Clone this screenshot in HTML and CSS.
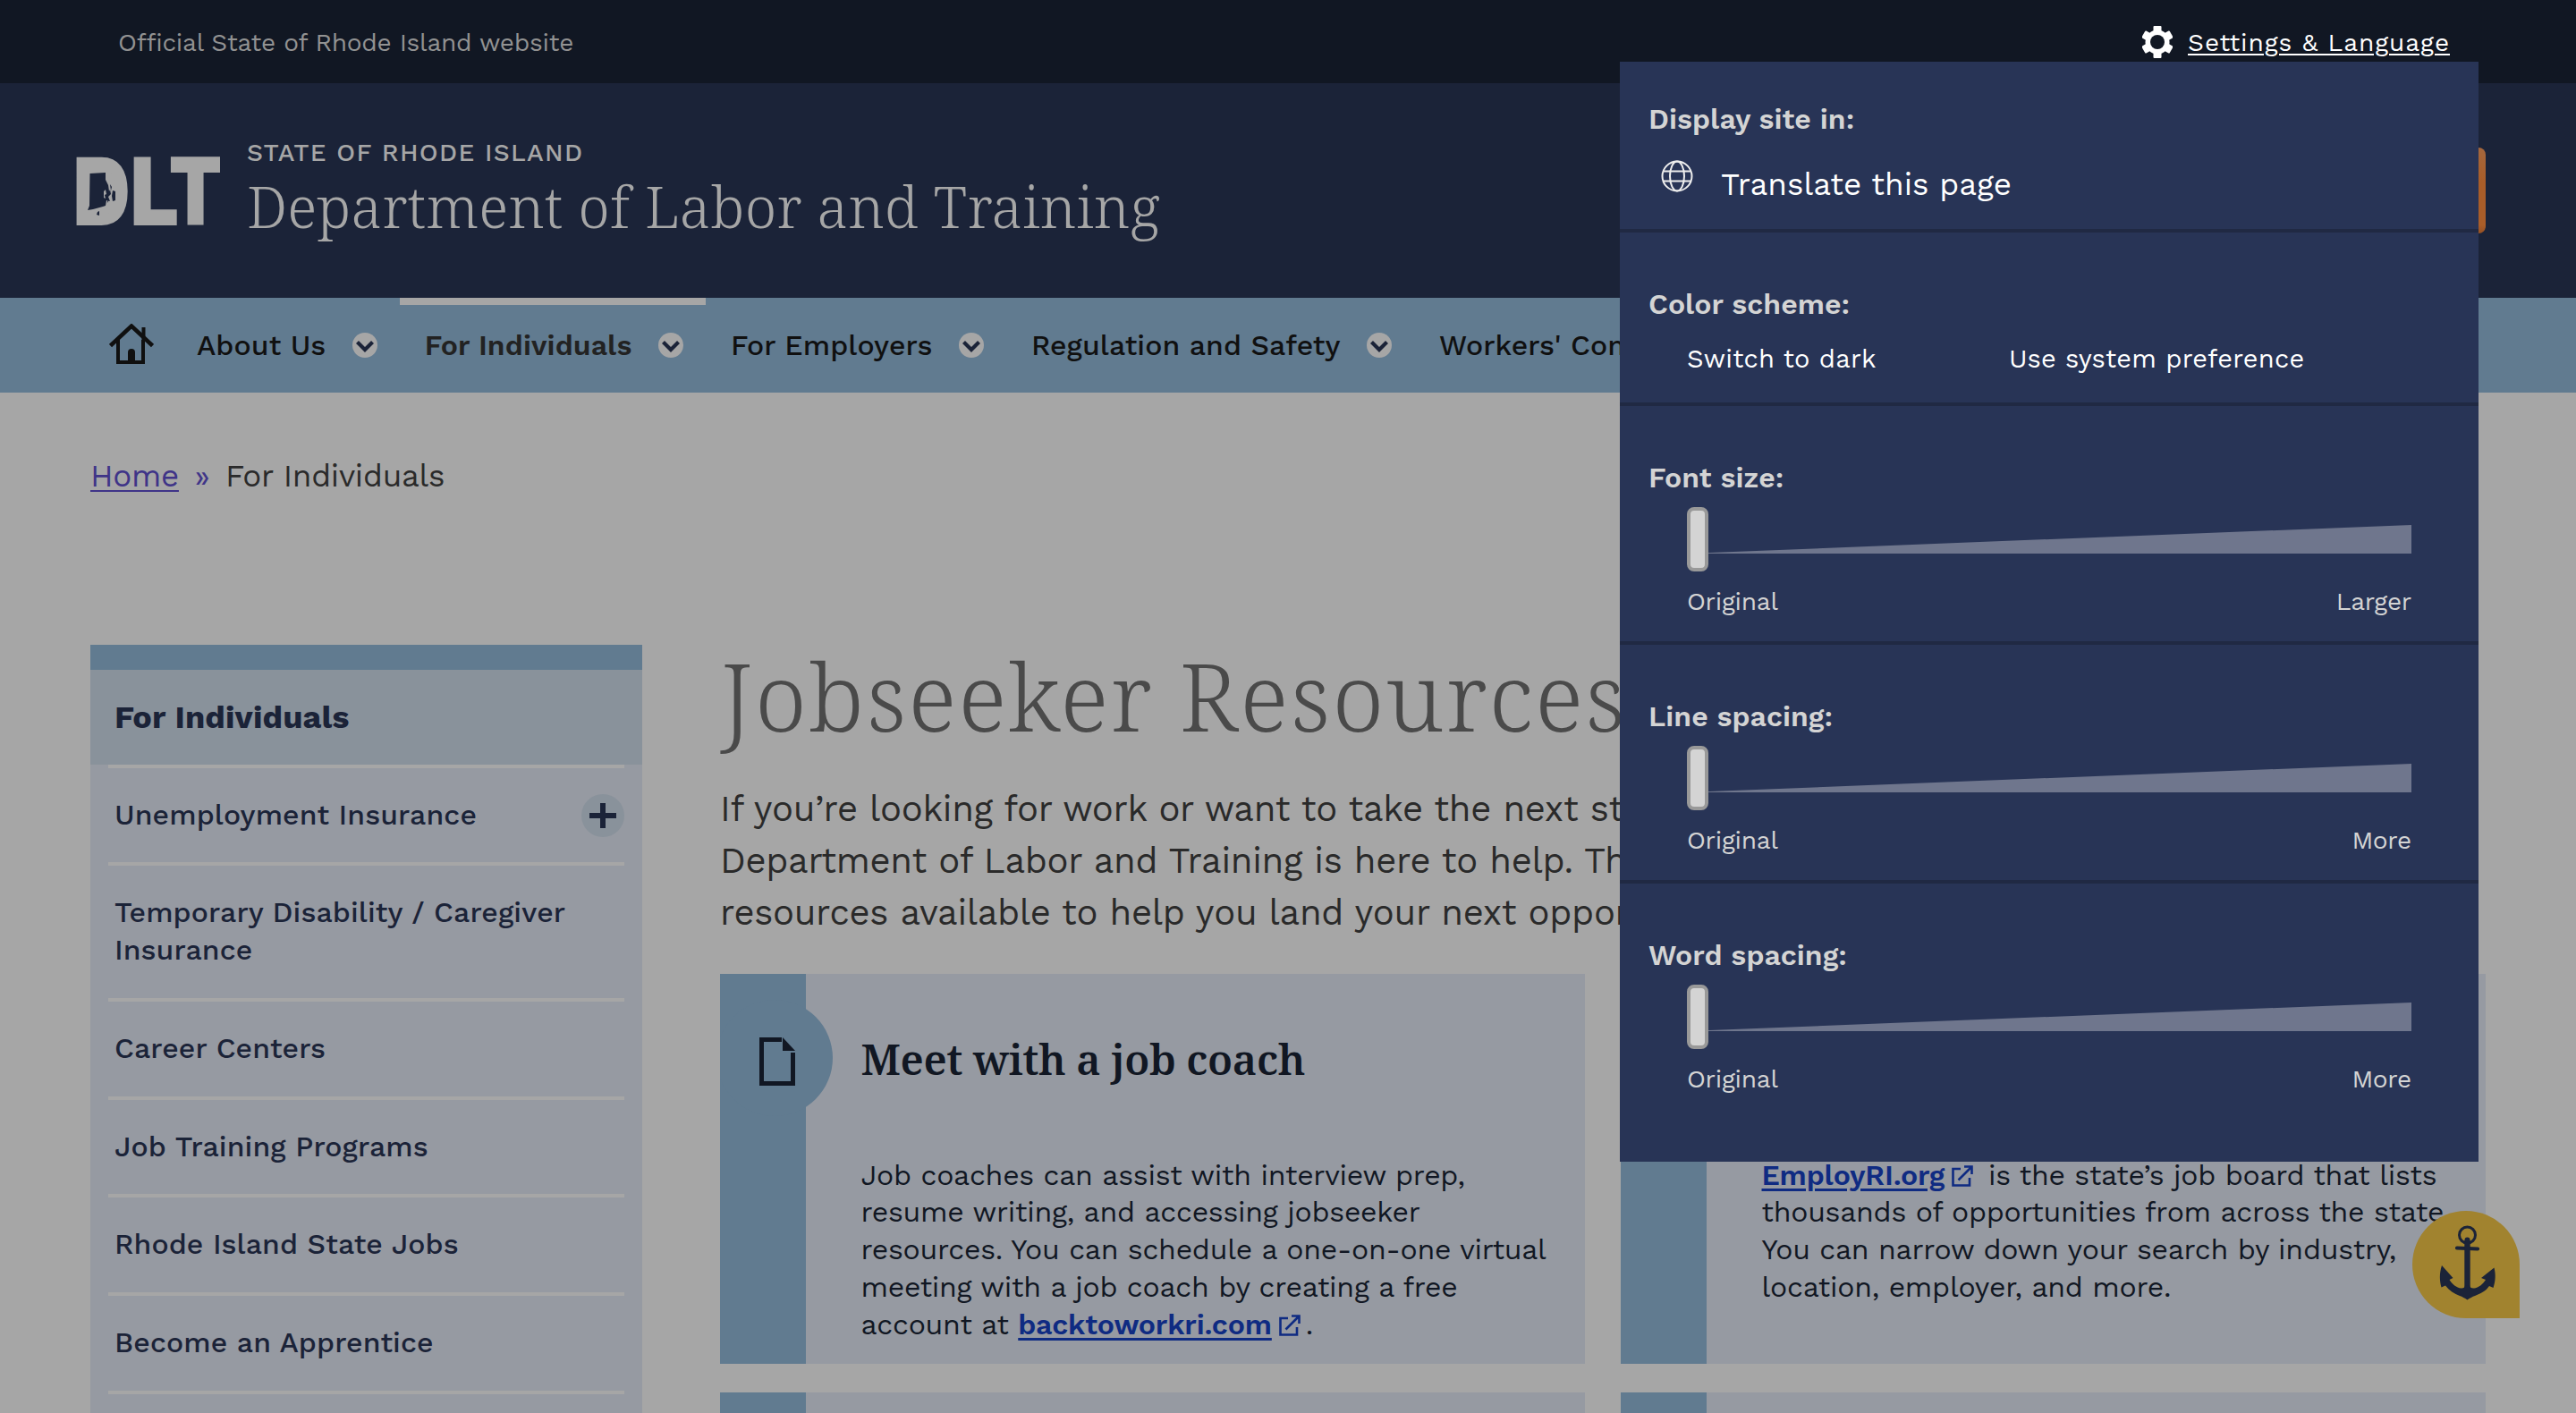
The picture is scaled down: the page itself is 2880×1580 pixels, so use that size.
FILE: index.html
```
<!DOCTYPE html>
<html lang="en">
<head>
<meta charset="utf-8">
<title>Jobseeker Resources | RI Department of Labor and Training</title>
<link rel="stylesheet" href="styles.css">
</head>
<body>
<svg class="defs" aria-hidden="true">
  <symbol id="chevron" viewBox="0 0 28 28"><circle cx="14" cy="14" r="14" fill="#a6a6a6"/><path d="M5.500 10.500 14 19l8.500-8.500" fill="none" stroke="#1b2338" stroke-width="4.200"/></symbol>
  <symbol id="external" viewBox="0 0 24 24"><path d="M10 4H1.500v18.500H20V14M7.500 16.500 22 2M14 1.500h8.500V10" fill="none" stroke="currentColor" stroke-width="2.600"/></symbol>
</svg>
<div class="page">
  <div class="topbar">
    <span class="official">Official State of Rhode Island website</span>
    <a class="settings"><svg class="gear" viewBox="0 0 34 36"><g fill="#fff"><rect x="12.500" y="0" width="9" height="36" rx="1"/><rect x="12.500" y="0" width="9" height="36" rx="1" transform="rotate(60 17 18)"/><rect x="12.500" y="0" width="9" height="36" rx="1" transform="rotate(120 17 18)"/><circle cx="17" cy="18" r="13.500"/></g><circle cx="17" cy="18" r="8" fill="#111723"/></svg><span class="settings-label">Settings &amp; Language</span></a>
  </div>

  <header class="masthead">
    <svg class="logo" viewBox="0 0 160 76" aria-label="DLT">
      <g class="logo-text"><text x="-5" y="76" textLength="66" lengthAdjust="spacingAndGlyphs">D</text><text x="59" y="76" textLength="56" lengthAdjust="spacingAndGlyphs">L</text><text x="104" y="76" textLength="59" lengthAdjust="spacingAndGlyphs">T</text></g>
      <path d="M12 13h24l8 13v26l-8 11H12z" fill="#a6a6a6"/>
      <path d="M15.500 18 33 17v8l3 6 1 7 1-2 1 5-3 3 2 5-4-1-1 6-3 1-11 3-6 1 2-5zM41 37l3 1v10l-3 1-1-6zM24 61l2-1v5l-3-1zM35 46l2 1-2 4zM38 30l2 3-1 4z" fill="#1b2338"/>
      <path d="M31 38l2-2 1 5-2 1 1 4-2-1z" fill="#a6a6a6"/>
    </svg>
    <div class="site-name">
      <div class="state">STATE OF RHODE ISLAND</div>
      <div class="department">Department of Labor and Training</div>
    </div>
    <div class="cta"></div>
  </header>

  <nav class="mainnav">
    <svg class="home" viewBox="0 0 50 46"><path d="M1.500 24.500 25 2.500l23.500 22" fill="none" stroke="#101010" stroke-width="4.500"/><path d="M10 18v25h28V18M38.500 20V4" fill="none" stroke="#101010" stroke-width="4"/><path d="M21 42V32a4 4 0 0 1 8 0v10z" fill="#101010"/></svg>
    <a class="nav-item">About Us<svg><use href="#chevron"/></svg></a>
    <a class="nav-item current">For Individuals<svg><use href="#chevron"/></svg></a>
    <a class="nav-item">For Employers<svg><use href="#chevron"/></svg></a>
    <a class="nav-item">Regulation and Safety<svg><use href="#chevron"/></svg></a>
    <a class="nav-item">Workers' Compensation<svg><use href="#chevron"/></svg></a>
  </nav>

  <div class="breadcrumb"><a>Home</a><span class="sep">»</span><span>For Individuals</span></div>

  <div class="layout">
    <aside class="sidebar">
      <div class="side-title">For Individuals</div>
      <a class="side-item">Unemployment Insurance<svg class="plus" viewBox="0 0 48 48"><circle cx="24" cy="24" r="24" fill="#89929b"/><path d="M9 24h30M24 10v28" stroke="#1b2338" stroke-width="6"/></svg></a>
      <a class="side-item">Temporary Disability / Caregiver Insurance</a>
      <a class="side-item">Career Centers</a>
      <a class="side-item">Job Training Programs</a>
      <a class="side-item">Rhode Island State Jobs</a>
      <a class="side-item">Become an Apprentice</a>
      <a class="side-item">&nbsp;</a>
    </aside>
    <main class="content">
      <h1>Jobseeker Resources</h1>
      <p class="intro">If you’re looking for work or want to take the next step,<br>Department of Labor and Training is here to help. There are<br>resources available to help you land your next opportunity.</p>
      <div class="cards">
        <article class="card">
          <div class="strip"><div class="bubble"><svg viewBox="0 0 40 54"><path d="M25 2.500H2.500v49h35V17" fill="none" stroke="#111723" stroke-width="5"/><path d="M26 0v15h14z" fill="#111723"/></svg></div></div>
          <div class="card-body">
            <h2>Meet with a job coach</h2>
            <p>Job coaches can assist with interview prep,<br>resume writing, and accessing jobseeker<br>resources. You can schedule a one-on-one virtual<br>meeting with a job coach by creating a free<br>account at <a>backtoworkri.com</a><svg class="ext"><use href="#external"/></svg>.</p>
          </div>
        </article>
        <article class="card">
          <div class="strip"></div>
          <div class="card-body">
            <h2>Find a job</h2>
            <p><a>EmployRI.org</a><svg class="ext"><use href="#external"/></svg> is the state’s job board that lists<br>thousands of opportunities from across the state.<br>You can narrow down your search by industry,<br>location, employer, and more.</p>
          </div>
        </article>
        <article class="card"><div class="strip"></div></article>
        <article class="card"><div class="strip"></div></article>
      </div>
    </main>
  </div>

  <section class="panel">
    <div class="group language">
      <h3>Display site in:</h3>
      <a class="translate"><svg viewBox="0 0 36 36"><g fill="none" stroke="#eee" stroke-width="2"><circle cx="18" cy="18" r="16.500"/><ellipse cx="18" cy="18" rx="8" ry="16.500"/><path d="M2.500 12.500h31M2.500 23.500h31"/></g></svg><span>Translate this page</span></a>
    </div>
    <div class="group scheme">
      <h3>Color scheme:</h3>
      <div class="choices"><a>Switch to dark</a><a>Use system preference</a></div>
    </div>
    <div class="group">
      <h3>Font size:</h3>
      <div class="slider"><div class="wedge"></div><div class="thumb"></div></div>
      <div class="ends"><span>Original</span><span>Larger</span></div>
    </div>
    <div class="group">
      <h3>Line spacing:</h3>
      <div class="slider"><div class="wedge"></div><div class="thumb"></div></div>
      <div class="ends"><span>Original</span><span>More</span></div>
    </div>
    <div class="group last">
      <h3>Word spacing:</h3>
      <div class="slider"><div class="wedge"></div><div class="thumb"></div></div>
      <div class="ends"><span>Original</span><span>More</span></div>
    </div>
  </section>

  <a class="anchor-badge"><svg viewBox="0 0 120 120"><g fill="none" stroke="#1b2338"><circle cx="61.500" cy="27" r="9" stroke-width="3"/><path d="M50 41.500 73 42.500" stroke-width="4.200" stroke-linecap="round"/><path d="M61.500 33v56" stroke-width="6.400"/><circle cx="61.500" cy="32.500" r="1.500" stroke-width="3"/></g><path d="M33 61 45.500 75l-4 2c3 5 8 9 13 9.500 3 .2 4-1 4.500-3h5c.5 2 2 3.200 5 3 5-.5 10-4.500 13-9.500l-5-2L91.500 63.500c2 8 1.500 15-1 22.500l-4.500-2c-4 6-10 8.500-16 11-3 1-5.500 2.500-8.500 4.500-3-2-5.500-3.500-8.500-4.500-6-2.500-12-6-16-11.500l-4.500 2c-2-7-2.500-15.500 .5-24.500z" fill="#1b2338"/></svg></a>
</div>
</body>
</html>
```
FILE: styles.css
```
* { box-sizing: border-box; }
body { margin: 0; background: #a6a6a6; font-family: "Work Sans", Inter, sans-serif; color: #2a2a2a; }
h1, h2, h3, p { margin: 0; font-weight: inherit; }
svg { display: block; flex: none; }
.defs { position: absolute; width: 0; height: 0; }
.page { position: relative; width: 2880px; height: 1580px; overflow: hidden; }

/* Top bar */
.topbar { display: flex; justify-content: space-between; align-items: center; height: 93px; padding: 1px 141px 0 132px; background: #111723; }
.official { color: #929292; font-size: 28px; letter-spacing: -.25px; }
.settings { display: flex; align-items: center; gap: 17px; color: #fff; font-size: 28px; }
.settings-label { letter-spacing: .93px; text-decoration: underline; text-decoration-thickness: 2px; text-underline-offset: 3px; }
.gear { width: 34px; height: 36px; }

/* Masthead */
.masthead { display: flex; height: 240px; padding: 59px 101px 0 85px; background: #1b2338; color: #a6a6a6; }
.logo { width: 160px; height: 76px; margin-top: 24px; overflow: visible; }
.logo-text { font: 800 115.200px "Work Sans", Inter, sans-serif; fill: #a6a6a6; }
.site-name { margin-left: 31px; }
.state { font-size: 28px; line-height: 38px; font-weight: 500; letter-spacing: 1.300px; }
.department { margin-top: 3px; font: 300 64px/76px "Roboto Slab", "Noto Serif", serif; letter-spacing: .1px; white-space: nowrap; }
.cta { width: 220px; height: 96px; margin: 13px 0 0 auto; border-radius: 8px; background: linear-gradient(#a5673d, #a95d29 40%, #a95d29 90%, #955024); }

/* Main navigation */
.mainnav { display: flex; align-items: center; height: 106px; padding-left: 122px; background: #617b90; color: #101010; }
.home { width: 50px; height: 46px; margin: -3px 20px 0 0; }
.nav-item { display: flex; align-items: center; gap: 29.500px; height: 106px; padding: 0 25px 0 28px; font-size: 32px; font-weight: 500; letter-spacing: .08px; white-space: nowrap; }
.nav-item svg { width: 28px; height: 28px; }
.current { box-shadow: inset 0 8px #a6a6a6; color: #222; font-weight: 600; }

/* Breadcrumb */
.breadcrumb { display: flex; height: 118px; padding: 67.500px 0 0 101px; font-size: 35px; line-height: 50px; letter-spacing: -.25px; }
.breadcrumb a, .sep { color: #3f3488; }
.breadcrumb a { text-decoration: underline; text-decoration-thickness: 2px; text-underline-offset: 4px; }
.sep { margin: 0 17.500px; }

.layout { display: flex; gap: 87px; padding: 163.700px 101px 0; }

/* Section menu */
.sidebar { width: 617px; height: 900px; border-top: 28.500px solid #617b90; background: #969aa2; color: #1b2338; }
.side-title { height: 106px; padding-left: 27px; background: #89929b; font-size: 36px; line-height: 106px; font-weight: 700; letter-spacing: .1px; }
.side-item { display: flex; align-items: center; justify-content: space-between; margin: 0 20px; padding: 31.900px 0 31.900px 7px; border-top: 4px solid #a6a6a6; font-size: 32px; line-height: 41.900px; font-weight: 500; letter-spacing: .1px; }
.plus { width: 48px; height: 48px; margin: -4px 0; }

/* Content */
.content { flex: 1; }
h1 { font: 300 105px/113px "Roboto Slab", "Noto Serif", serif; letter-spacing: 1.900px; color: #4a4a4a; }
.intro { margin-top: 42px; font-size: 40px; line-height: 57.900px; letter-spacing: -.3px; white-space: nowrap; }
.cards { display: grid; grid-template-columns: 967px 967px; gap: 32px 40px; margin-top: 39.700px; }
.card { display: flex; height: 435.500px; background: #969aa2; color: #111723; overflow: hidden; }
.strip { width: 96px; background: #617b90; }
.bubble { display: flex; align-items: center; justify-content: center; width: 130px; height: 130px; margin: 29px 0 0 -4px; padding: 7px 0 0 5px; border-radius: 50%; background: #617b90; }
.bubble svg { width: 40px; height: 54px; }
.card-body { padding: 64.500px 0 0 61.500px; white-space: nowrap; }
h2 { font: 600 47px/60px "Roboto Slab", "Noto Serif", serif; letter-spacing: -.4px; }
.card p { margin-top: 80px; font-size: 32px; line-height: 41.800px; letter-spacing: -.26px; }
.card a { color: #0f2b82; font-weight: 600; letter-spacing: -.15px; text-decoration: underline; text-decoration-thickness: 3px; text-underline-offset: 4px; }
.ext { display: inline-block; width: 24px; height: 24px; margin: 0 6px 0 8px; color: #0f2b82; vertical-align: -2px; }

/* Settings panel, laid over the page */
.panel { position: absolute; left: 1811px; top: 69px; width: 960px; height: 1230px; background: #283456; color: #d4d4d4; }
.group { height: 267px; padding: 59px 75px 0 32px; border-bottom: 4px solid #202943; }
.language { height: 191px; padding-top: 43px; }
.scheme { height: 194px; }
.last { height: 311px; border: 0; }
h3 { font-size: 32px; line-height: 43px; font-weight: 600; letter-spacing: .03px; }
.translate { display: flex; margin: 24px 0 0 14px; color: #fff; font-size: 35px; line-height: 54px; font-weight: 450; }
.translate svg { width: 36px; height: 36px; margin-right: 31px; }
.choices { display: grid; grid-template-columns: 360px 1fr; margin: 17px 0 0 43px; color: #fff; font-size: 29px; line-height: 45px; font-weight: 450; letter-spacing: .22px; }
.slider { display: flex; align-items: center; height: 72px; margin: 11px 0 0 43px; }
.wedge { width: 810px; height: 32px; background: #6f768d; clip-path: polygon(0 100%, 100% 0, 100% 100%); }
.thumb { position: relative; width: 24px; height: 72px; margin-left: -810px; border: 4px solid #999; border-radius: 8px; background: #d4d4d4; }
.ends { display: flex; justify-content: space-between; margin: 15px 0 0 43px; font-size: 28px; line-height: 38px; letter-spacing: -.25px; }

/* Floating anchor badge */
.anchor-badge { position: absolute; left: 2697px; top: 1354px; width: 120px; height: 120px; border-radius: 50% 50% 0 50%; background: #a1832f; }
```
